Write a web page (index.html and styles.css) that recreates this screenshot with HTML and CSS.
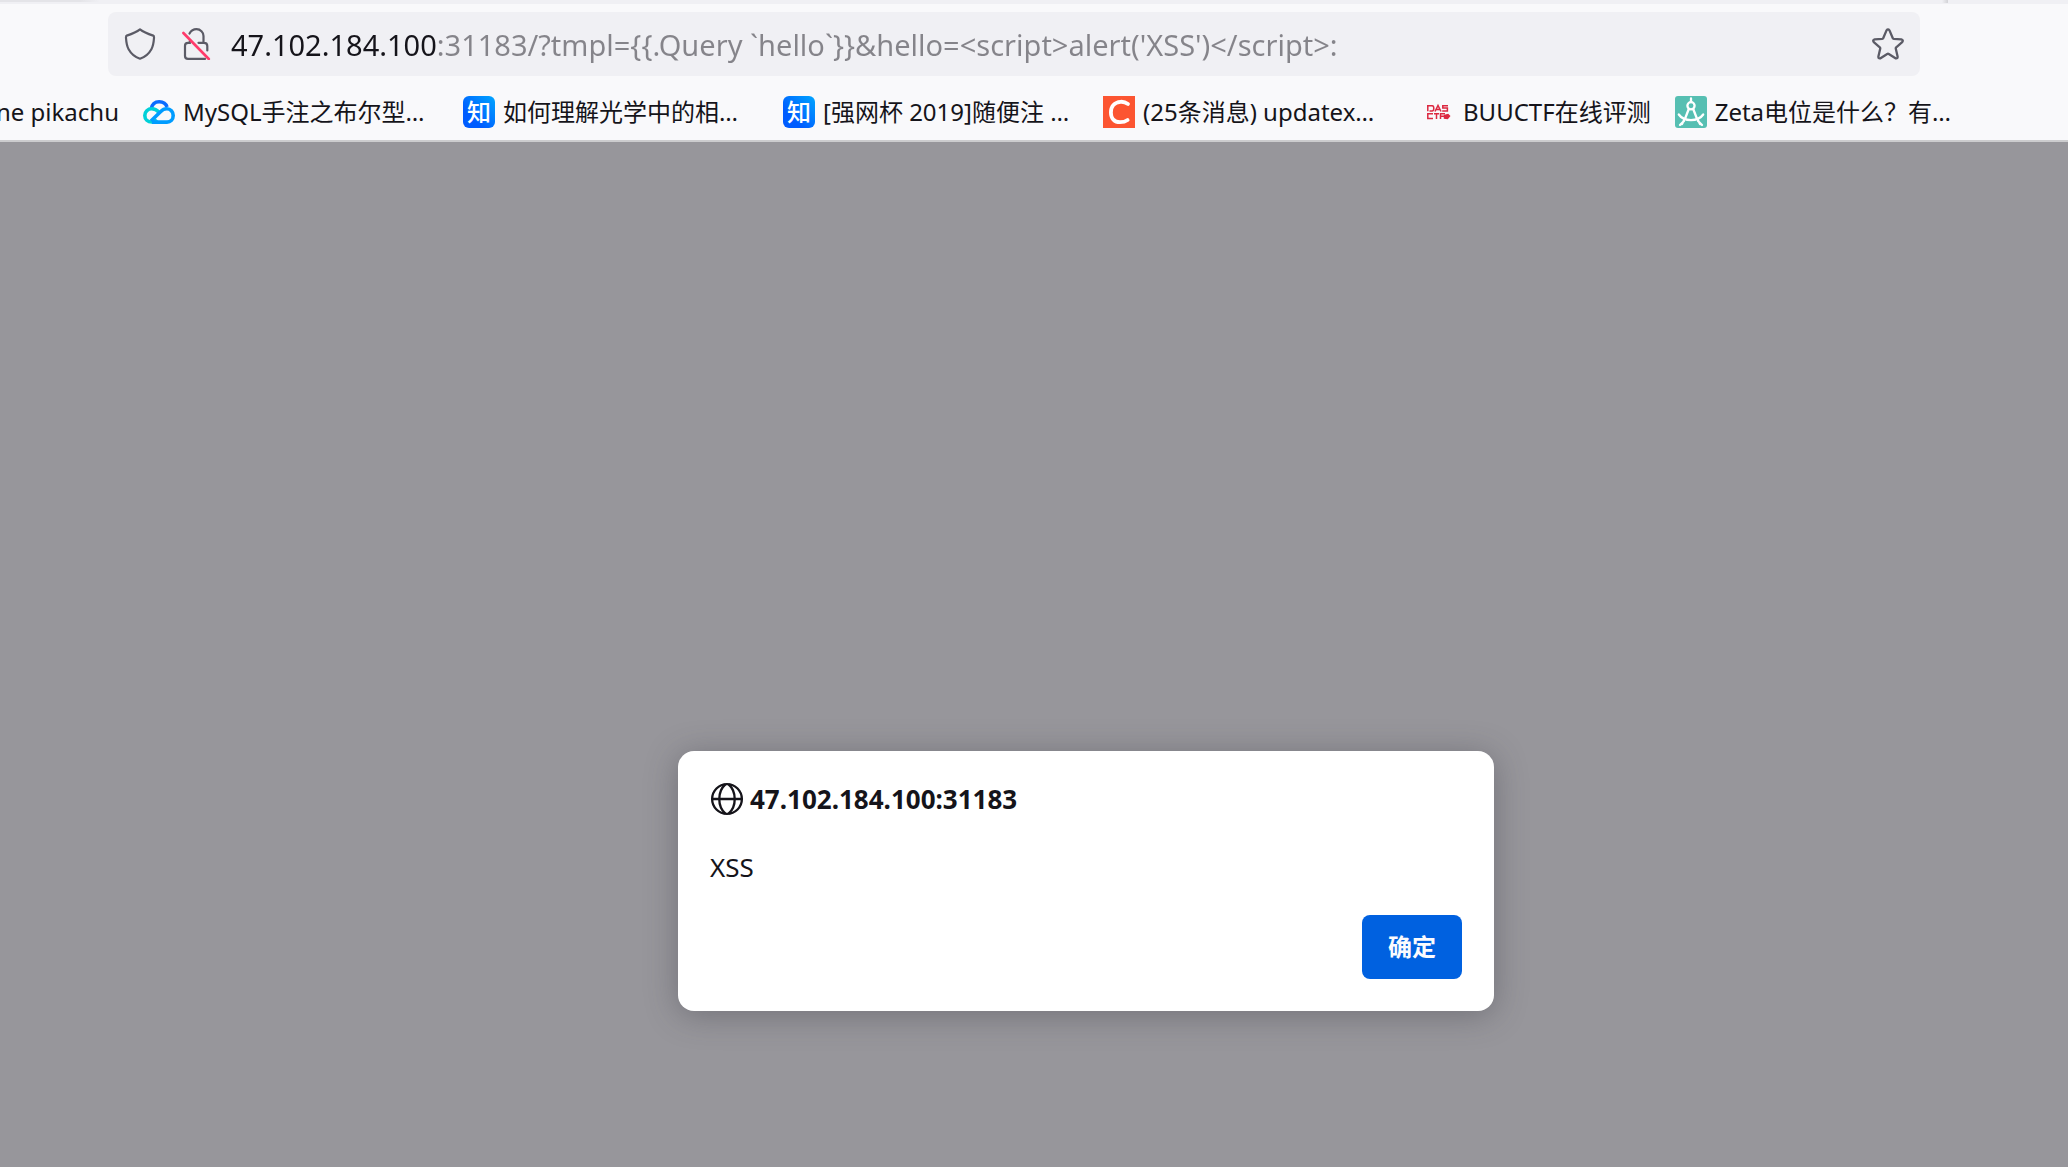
FILE: index.html
```html
<!DOCTYPE html>
<html lang="zh-CN">
<head>
<meta charset="utf-8">
<title>47.102.184.100:31183</title>
<link rel="stylesheet" href="styles.css">
</head>
<body>
<header class="chrome">
  <div class="tabstrip"><span class="tab-edge"></span><span class="tab-divider"></span></div>
  <div class="toolbar">
    <div class="urlbar">
      <button class="icon-button" type="button" aria-label="跟踪保护">
        <svg viewBox="0 0 32 32" fill="none" stroke="#5b5b66" stroke-width="2.2" stroke-linejoin="round"><path d="M16 1.3 C12 4.4 7.5 6 2.8 7.6 C2 8 1.9 9 2 10 C2.3 14.5 2.8 18 4.6 21.2 C7 25.6 11 29 16 30.7 C21 29 25 25.6 27.4 21.2 C29.2 18 29.7 14.5 30 10 C30.1 9 30 8 29.2 7.6 C24.5 6 20 4.4 16 1.3Z"/></svg>
      </button>
      <button class="icon-button" type="button" aria-label="连接不安全">
        <svg viewBox="0 0 32 32" fill="none" stroke="#5b5b66" stroke-width="2.2" stroke-linecap="round"><path d="M9.5 5.5 C11 2.8 13.4 1.2 16.5 1.2 C20.5 1.2 23.5 4.2 23.5 8 V14.8 M9.8 13 V14.8 H8 C6.3 14.8 5 16 5 17.8 V28 C5 29.8 6.2 30.9 8 30.9 H25 M18.5 14.8 H24 C26 14.8 27.3 16 27.3 18 V22.5"/><path d="M3.4 5 L28.8 31" stroke="#ff3b6b" stroke-width="2.6"/></svg>
      </button>
      <input class="address" type="text" aria-label="地址" spellcheck="false" value="47.102.184.100:31183/?tmpl={{.Query `hello`}}&amp;hello=&lt;script&gt;alert('XSS')&lt;/script&gt;:">
      <button class="icon-button" type="button" aria-label="添加书签">
        <svg viewBox="0 0 32 32" fill="none" stroke="#5b5b66" stroke-width="2.3" stroke-linejoin="round"><path d="M14.5 2.4 Q16 .4 17.5 2.4 L20.7 10 Q21 10.7 21.8 10.8 L29.3 11.4 Q31.7 12 30.2 14.2 L24.2 19.4 Q23.6 20 23.8 20.8 L25.6 28.6 Q25.8 31 23.5 30.3 L16.8 26 Q16 25.5 15.2 26 L8.5 30.3 Q6.2 31 6.4 28.6 L8.2 20.8 Q8.4 20 7.8 19.4 L1.8 14.2 Q.3 12 2.7 11.4 L10.2 10.8 Q11 10.7 11.3 10Z"/></svg>
      </button>
    </div>
  </div>
  <nav class="bookmarks" aria-label="书签">
    <a class="bookmark bookmark-clipped" href="#">ne pikachu</a>
    <a class="bookmark bookmark-wide" href="#">
      <svg class="favicon" viewBox="0 0 32 32" fill="none" stroke-width="3.6">
        <path d="M8.2 13 C8.8 8.4 12 5.7 16.2 5.7 C20 5.7 23 7.8 24 11" stroke="#0a6cff"/>
        <path d="M16 16.4 C13.8 14 11.4 12.8 8.8 12.8 C4.8 12.8 1.8 15.8 1.8 19.5 C1.8 23.3 4.8 26 8.8 26 C11 26 12.4 25.3 14 23.8" stroke="#00d0d8"/>
        <path d="M9 26.1 H24 C27.6 26.1 30.2 23.2 30.2 19.6 C30.2 15.8 27.5 12.8 23.8 12.8 C21 12.8 19.3 13.9 17.5 15.7 L8 25" stroke="#009cff"/>
      </svg>
      <span>MySQL手注之布尔型…</span>
    </a>
    <a class="bookmark bookmark-wide" href="#"><span class="favicon zhihu" aria-hidden="true">知</span><span>如何理解光学中的相…</span></a>
    <a class="bookmark bookmark-wide" href="#"><span class="favicon zhihu" aria-hidden="true">知</span><span>[强网杯 2019]随便注 …</span></a>
    <a class="bookmark bookmark-wide" href="#">
      <svg class="favicon" viewBox="0 0 32 32"><path fill="#fc5531" d="M0 0H32V32H0Z"/><path d="M25 8 C22.5 6.2 20 5.6 17.5 5.8 C11.5 6.2 7.9 10.5 7.9 16.5 C7.9 22.5 11.5 26.2 17 26.2 C20.2 26.2 22.5 25.5 24.6 24" fill="none" stroke="#fff" stroke-width="3.8" stroke-linecap="round"/></svg>
      <span>(25条消息) updatex…</span>
    </a>
    <a class="bookmark" href="#">
      <svg class="favicon" viewBox="0 0 32 32" fill="none" stroke="#dc2840" stroke-width="1.5">
        <path d="M4.8 10V15.2M4 9.7H9.2Q10.8 9.7 10.8 12.3 Q10.8 15 9.2 15H6.5M12 15.5L15 9.5L18 15.5M13.5 13.5H17M25 9.7H19.8V12.1H24.4V15H19.2"/>
        <path d="M10 17.7H4.8V22.6H10M11 17.7H16M13.5 17.7V23M17.5 23V17.7H22M17.5 20.3H21"/>
        <path d="M21.5 19.5L25 18.5L26.5 20L24.5 22.5L21.5 22Z" fill="#dc2840"/>
      </svg>
      <span>BUUCTF在线评测</span>
    </a>
    <a class="bookmark" href="#">
      <svg class="favicon" viewBox="0 0 32 32"><rect width="32" height="32" rx="3" fill="#56bfb2"/><g fill="none" stroke="#fff" stroke-width="2.3" stroke-linecap="round"><path d="M16 2.5V6M13.6 13.5L10.5 21.5M18.4 13.5L21.5 21.5M9 25L5 29M23 25L27 29M3.8 18.5C9 26 23 26 28.2 18.5M10.5 21.5L7 28M21.5 21.5L25 28"/><circle cx="16" cy="9.8" r="3.6"/></g></svg>
      <span>Zeta电位是什么？有…</span>
    </a>
  </nav>
</header>
<main class="page">
  <dialog class="alert" open aria-labelledby="origin">
    <h1 class="origin" id="origin">
      <svg class="globe" viewBox="0 0 32 32" fill="none" stroke="#15141a" stroke-width="2.2" aria-hidden="true"><circle cx="16" cy="16" r="14"/><path d="M2 16H30M14.5 2.2C6.8 9 6.8 23 14.5 29.8M17.5 2.2C25.2 9 25.2 23 17.5 29.8"/></svg>
      <span>47.102.184.100:31183</span>
    </h1>
    <p class="message">XSS</p>
    <form class="actions" method="dialog"><button class="confirm">确定</button></form>
  </dialog>
</main>
</body>
</html>
```

FILE: styles.css
```css
* {
  box-sizing: border-box;
}

body {
  margin: 0;
  min-height: 100vh;
  display: flex;
  flex-direction: column;
  overflow-x: hidden;
  background: #97969b;
  color: #15141a;
  font-family: "Noto Sans", "Noto Sans CJK SC", sans-serif;
  font-size: 24px;
}

button,
input {
  font: inherit;
  border: 0;
  padding: 0;
}

.chrome {
  background: #f9f9fb;
  border-bottom: 2px solid #ccccce;
}

.tabstrip {
  display: flex;
  justify-content: space-between;
  height: 4px;
  padding-right: 120px;
  background: #f0f0f4;
}

.tab-edge {
  width: 100px;
  height: 2px;
  background: linear-gradient(to right, #e4e4e8 80%, #f0f0f4);
}

.tab-divider {
  width: 6px;
  height: 3px;
  background: linear-gradient(to right, #f0f0f4, #d2d2d6);
}

.toolbar {
  padding: 8px 148px 0 108px;
}

.urlbar {
  display: flex;
  align-items: center;
  gap: 24px;
  height: 64px;
  padding: 0 16px;
  border-radius: 8px;
  background: #f0f0f4;
}

.icon-button {
  flex: none;
  width: 32px;
  height: 32px;
  background: none;
}

.icon-button svg {
  display: block;
}

.address {
  flex: 1;
  min-width: 0;
  height: 48px;
  margin-left: -5px;
  background: linear-gradient(to right, #15141a 206px, #85848a 206px);
  background-clip: text;
  color: transparent;
  font-size: 29px;
  outline: none;
}

.bookmarks {
  display: flex;
  height: 64px;
  padding-top: 8px;
  overflow: hidden;
}

.bookmark {
  flex: none;
  display: flex;
  align-items: center;
  gap: 8px;
  padding: 0 12px;
  color: inherit;
  text-decoration: none;
  white-space: nowrap;
  line-height: 32px;
}

.bookmark-wide {
  width: 320px;
}

.bookmark-clipped {
  width: 131px;
  justify-content: flex-end;
}

.favicon {
  flex: none;
  width: 32px;
  height: 32px;
}

.zhihu {
  border-radius: 6px;
  background: linear-gradient(to top right, #005cff 30%, #00a6ff);
  color: #fff;
  font-weight: 500;
  text-align: center;
}

.page {
  flex: 1;
  display: flex;
  justify-content: center;
  align-items: flex-end;
  padding: 32px 0 156px 104px;
}

.alert {
  position: static;
  width: 816px;
  max-width: 100%;
  margin: 0;
  padding: 30px 32px 32px;
  border: 0;
  border-radius: 16px;
  background: #fff;
  color: inherit;
  font-size: 26px;
  line-height: 36px;
  box-shadow: 0 4px 32px rgba(58, 57, 68, 0.4);
}

.origin {
  display: flex;
  align-items: center;
  gap: 6px;
  margin: 0;
  font-size: 26px;
  font-weight: 700;
}

.globe {
  width: 34px;
  height: 34px;
}

.message {
  margin: 32px 0 30px;
}

.actions {
  display: flex;
  justify-content: flex-end;
}

.confirm {
  width: 100px;
  height: 64px;
  border-radius: 8px;
  background: #0061e0;
  color: #fbfbfe;
  font-size: 24px;
  font-weight: 700;
}
```
